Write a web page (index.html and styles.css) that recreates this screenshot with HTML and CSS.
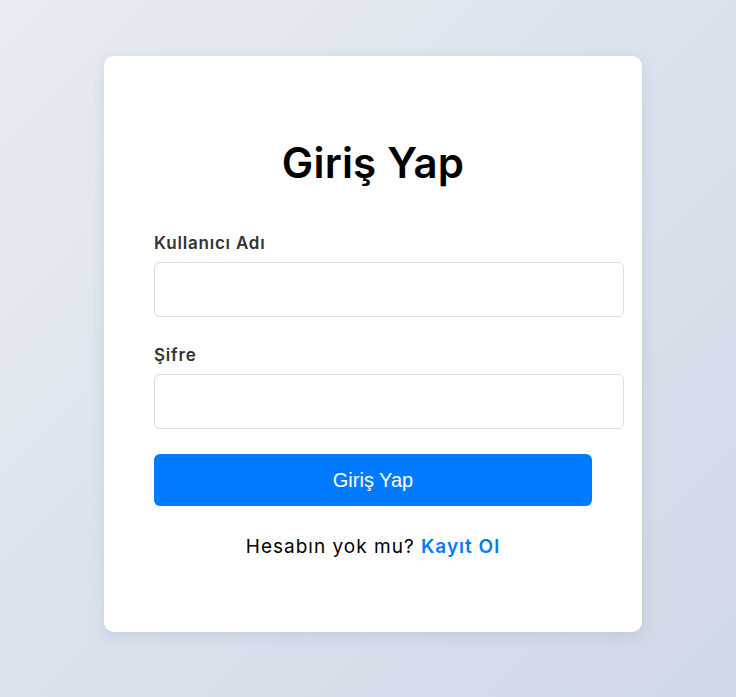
FILE: index.html
```html
<!DOCTYPE html>
<html lang="tr">
<head>
<meta charset="utf-8">
<title>Giriş Yap</title>
<link rel="stylesheet" href="styles.css">
</head>
<body>
<div class="page">
  <form class="card">
    <h2 class="title">Giriş Yap</h2>
    <label class="label" for="u">Kullanıcı Adı</label>
    <input class="input" id="u" type="text">
    <label class="label" for="p">Şifre</label>
    <input class="input" id="p" type="password">
    <button class="btn" type="button">Giriş Yap</button>
    <p class="foot">Hesabın yok mu? <a class="link" href="#">Kayıt Ol</a></p>
  </form>
</div>
</body>
</html>
```
FILE: styles.css
```css
html, body {
  margin: 0;
  padding: 0;
  height: 100%;
}
body {
  font-family: "Inter", "Liberation Sans", sans-serif;
  background: linear-gradient(135deg, #e7ebf2 0%, #cfd8e6 100%);
}
.page {
  padding-top: 56px;
  padding-left: 104px;
}
.card {
  width: 438px;
  padding: 50px;
  background: #fff;
  border-radius: 10px;
  box-shadow: 0 4px 14px rgba(60, 80, 120, 0.12);
  display: flex;
  flex-direction: column;
  height: 476px;
}
.title {
  margin: 32px 0 43px;
  text-align: center;
  font-size: 42px;
  line-height: 50px;
  font-weight: 600;
  letter-spacing: 0.2px;
  color: #000;
}
.label {
  font-size: 17px;
  line-height: 24px;
  font-weight: 600;
  letter-spacing: 0.8px;
  color: #333;
  margin-bottom: 7px;
}
.input {
  width: 438px;
  height: 23px;
  padding: 15px;
  border: 1px solid #ddd;
  border-radius: 6px;
  font-size: 16px;
  margin: 0 0 26px;
}
.input + .label + .input {
  margin-bottom: 25px;
}
.btn {
  height: 52px;
  width: 438px;
  border: none;
  border-radius: 6px;
  background: #007bff;
  color: #fff;
  font-family: "Liberation Sans", Arial, sans-serif;
  font-size: 20px;
  padding: 0;
}
.foot {
  margin: 27px 0 0;
  text-align: center;
  font-size: 19px;
  line-height: 27px;
  letter-spacing: 1px;
  color: #000;
}
.link {
  color: #007bff;
  font-weight: 600;
  text-decoration: none;
}
```
